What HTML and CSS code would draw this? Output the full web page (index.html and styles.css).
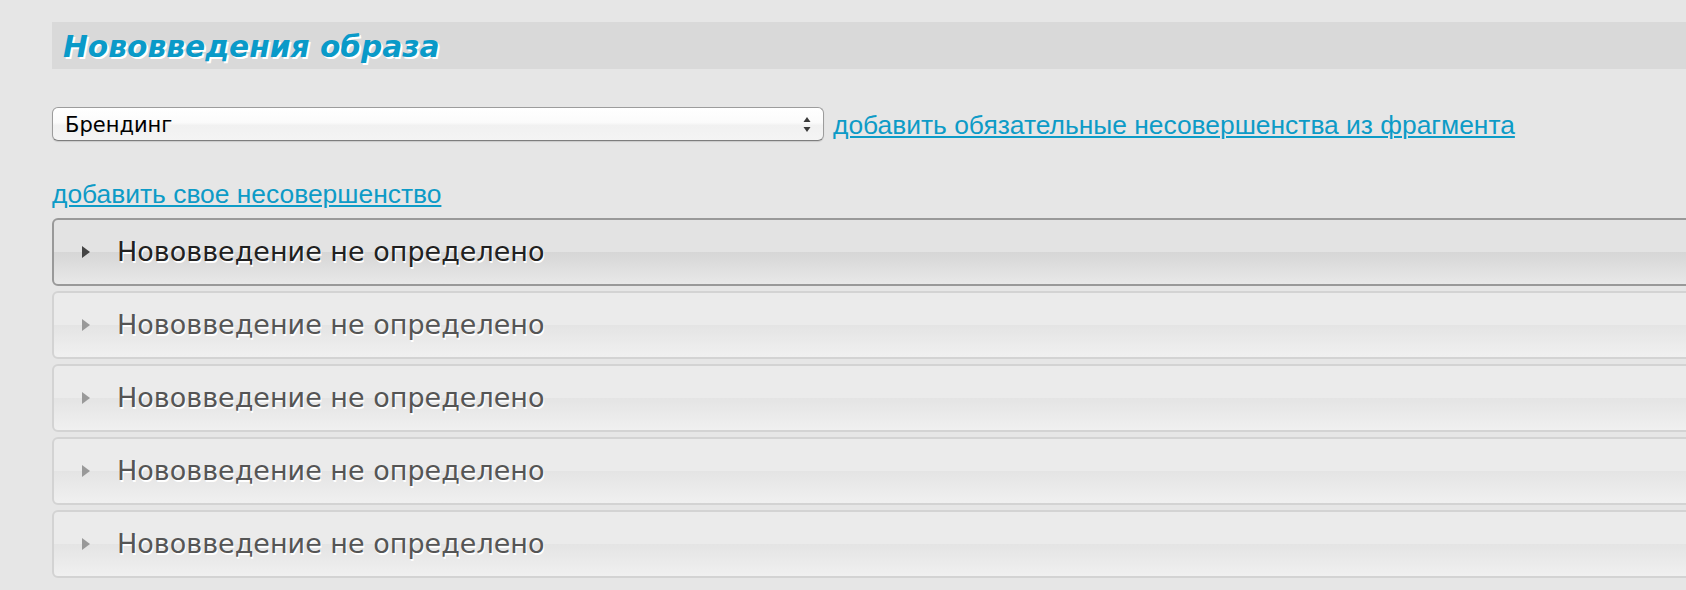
FILE: index.html
```html
<!DOCTYPE html>
<html lang="ru">
<head>
<meta charset="utf-8">
<title>Нововведения образа</title>
<link rel="stylesheet" href="styles.css">
</head>
<body>
<div class="page">
  <div class="section-head">
    <h2 class="section-title">Нововведения образа</h2>
  </div>

  <div class="select-row">
    <div class="select">
      <span class="select-value">Брендинг</span>
      <svg class="select-arrows" width="8" height="15" viewBox="0 0 8 15">
        <path d="M4 0 L7.5 5 L0.5 5 Z" fill="#3a3a3a"/>
        <path d="M0.5 10 L7.5 10 L4 15 Z" fill="#3a3a3a"/>
      </svg>
    </div>
    <a class="link" href="#">добавить обязательные несовершенства из фрагмента</a>
  </div>

  <div class="own-row">
    <a class="link" href="#">добавить свое несовершенство</a>
  </div>

  <div class="accordion">
    <div class="acc-item is-hover">
      <span class="acc-tri"></span>
      <span class="acc-label">Нововведение не определено</span>
    </div>
    <div class="acc-item">
      <span class="acc-tri"></span>
      <span class="acc-label">Нововведение не определено</span>
    </div>
    <div class="acc-item">
      <span class="acc-tri"></span>
      <span class="acc-label">Нововведение не определено</span>
    </div>
    <div class="acc-item">
      <span class="acc-tri"></span>
      <span class="acc-label">Нововведение не определено</span>
    </div>
    <div class="acc-item">
      <span class="acc-tri"></span>
      <span class="acc-label">Нововведение не определено</span>
    </div>
  </div>
</div>
</body>
</html>
```

FILE: styles.css
```css
html, body {
  margin: 0;
  padding: 0;
  overflow: hidden;
  background: #e6e6e6;
}

.page {
  width: 1700px;
  padding: 22px 0 0 52px;
}

.section-head {
  height: 47px;
  background: #d9d9d9;
  display: flex;
  align-items: center;
  padding-left: 11px;
}

.section-title {
  margin: 0;
  font-family: "DejaVu Sans", Verdana, sans-serif;
  font-weight: bold;
  font-style: italic;
  font-size: 29.7px;
  line-height: 34px;
  color: #0a9ac8;
  text-shadow: 2px 2px 0 #ffffff;
  position: relative;
  top: 1px;
}

.select-row {
  margin-top: 38px;
  display: flex;
  align-items: center;
  gap: 9px;
}

.select {
  box-sizing: border-box;
  width: 772px;
  height: 34px;
  border: 1px solid #9c9c9c;
  border-bottom-color: #7e7e7e;
  border-radius: 6px;
  background: linear-gradient(#ffffff 0%, #fbfbfb 45%, #f1f1f1 55%, #f4f4f4 100%);
  box-shadow: 0 1px 1px rgba(0, 0, 0, 0.12);
  display: flex;
  align-items: center;
  padding: 0 12px 0 12px;
}

.select-value {
  flex: 1;
  font-family: "DejaVu Sans", Verdana, sans-serif;
  font-size: 21px;
  color: #000;
  position: relative;
  top: 1px;
}

.select-arrows {
  display: block;
}

.link {
  font-family: "Liberation Sans", Arial, sans-serif;
  font-size: 26.4px;
  line-height: 30px;
  color: #0d9bc7;
  text-decoration: underline;
  text-decoration-thickness: 2px;
  text-underline-offset: 2px;
}

.select-row .link {
  position: relative;
  top: 1px;
}

.own-row {
  margin-top: 38px;
  height: 30px;
}

.accordion {
  margin-top: 9px;
  display: flex;
  flex-direction: column;
  gap: 5px;
}

.acc-item {
  box-sizing: border-box;
  height: 68px;
  border: 2px solid #d3d3d3;
  border-radius: 6px;
  background: linear-gradient(#ebebeb 0%, #ebebeb 50%, #e4e4e4 50%, #f0f0f0 100%);
  display: flex;
  align-items: center;
  padding-left: 28px;
  color: #555555;
}

.acc-item.is-hover {
  border-color: #999999;
  background: linear-gradient(#e3e3e3 0%, #e3e3e3 50%, #d6d6d6 50%, #e8e8e8 100%);
  color: #212121;
}

.acc-tri {
  width: 0;
  height: 0;
  border-left: 8px solid #999999;
  border-top: 6.5px solid transparent;
  border-bottom: 6.5px solid transparent;
  margin-right: 27px;
}

.is-hover .acc-tri {
  border-left-color: #444444;
}

.acc-label {
  font-family: "DejaVu Sans", Verdana, sans-serif;
  font-size: 27px;
  line-height: 32px;
  text-shadow: 1px 2px 0 #ffffff;
}
```
